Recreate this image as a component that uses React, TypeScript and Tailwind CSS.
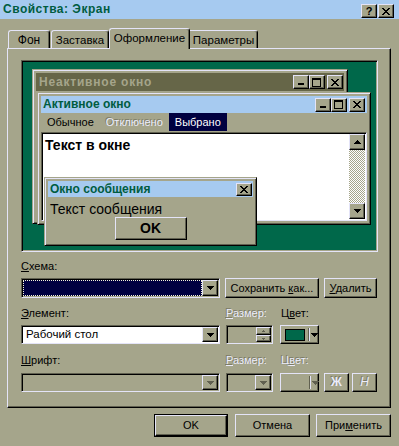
import React from "react";

const RAISED =
  "border border-t-[#e4e4f8] border-l-[#e4e4f8] border-r-black border-b-black shadow-[inset_-1px_-1px_0_#606050]";
const SUNKEN =
  "border border-t-[#606050] border-l-[#606050] border-r-[#e4e4f8] border-b-[#e4e4f8] shadow-[inset_1px_1px_0_#000]";
const WINFRAME =
  "border border-t-[#a5a58b] border-l-[#a5a58b] border-r-black border-b-black shadow-[inset_1px_1px_0_#e4e4f8,inset_-1px_-1px_0_#606050]";
const DIS = "text-[#ececfa] [text-shadow:-1px_-1px_0_#7c7c68]";

function CloseIcon() {
  return (
    <svg width="8" height="7" viewBox="0 0 8 7" shapeRendering="crispEdges">
      <path d="M0 0h2v1h1v1h2V1h1V0h2v1H7v1H6v1H5v1h1v1h1v1h1v1H6V6H5V5H3v1H2v1H0V6h1V5h1V4h1V3H2V2H1V1H0z" fill="#000" />
    </svg>
  );
}

function MinIcon() {
  return (
    <svg width="6" height="2" viewBox="0 0 6 2" shapeRendering="crispEdges">
      <rect width="6" height="2" fill="#000" />
    </svg>
  );
}

function MaxIcon() {
  return (
    <svg width="9" height="9" viewBox="0 0 9 9" shapeRendering="crispEdges">
      <path d="M0 0h9v9H0zM1 2v6h7V2z" fill="#000" fillRule="evenodd" />
    </svg>
  );
}

function ArrowDown({ color = "#000" }: { color?: string }) {
  return (
    <svg width="7" height="4" viewBox="0 0 7 4" shapeRendering="crispEdges">
      <path d="M0 0h7v1H6v1H5v1H4v1H3V3H2V2H1V1H0z" fill={color} />
    </svg>
  );
}

function ArrowUp({ color = "#000" }: { color?: string }) {
  return (
    <svg width="7" height="4" viewBox="0 0 7 4" shapeRendering="crispEdges">
      <path d="M3 0h1v1h1v1h1v1h1v1H0V3h1V2h1V1h1z" fill={color} />
    </svg>
  );
}

function TitleBtn({ kind }: { kind: "min" | "max" | "close" }) {
  if (kind === "min")
    return (
      <div className={"w-[16px] h-[14px] bg-[#a5a58b] flex items-end pl-[4px] pb-[3px] " + RAISED}>
        <MinIcon />
      </div>
    );
  if (kind === "max")
    return (
      <div className={"w-[16px] h-[14px] bg-[#a5a58b] flex items-center justify-center pr-[1px] " + RAISED}>
        <MaxIcon />
      </div>
    );
  return (
    <div className={"w-[16px] h-[14px] bg-[#a5a58b] flex items-center justify-center pr-[1px] " + RAISED}>
      <CloseIcon />
    </div>
  );
}

function DropBtn({ disabled = false }: { disabled?: boolean }) {
  return (
    <div className={"w-[16px] h-full bg-[#a5a58b] flex items-center justify-center " + RAISED}>
      <ArrowDown color={disabled ? "#606050" : "#000"} />
    </div>
  );
}

function Preview() {
  return (
    <div className={"w-[357px] h-[192px] p-[1px] flex " + SUNKEN}>
      <div className="relative flex-1 bg-[#00684a]">
        {/* inactive window */}
        <div className={"absolute left-[9px] top-[7px] w-[316px] h-[155px] bg-[#a5a58b] p-[3px] " + WINFRAME}>
          <div className="h-[18px] bg-[#666648] flex items-center pl-[3px] pr-[1px]">
            <span className="flex-1 font-bold text-[12px] tracking-[0.8px] text-[#a5a58b]">Неактивное окно</span>
            <TitleBtn kind="min" />
            <TitleBtn kind="max" />
            <div className="w-[2px]" />
            <TitleBtn kind="close" />
          </div>
        </div>
        {/* active window */}
        <div className={"absolute left-[14px] top-[30px] w-[334px] h-[133px] bg-[#a5a58b] p-[3px] flex flex-col " + WINFRAME}>
          <div className="h-[17px] bg-[#a6caf0] flex items-center pl-[2px] pr-[2px]">
            <span className="flex-1 font-bold text-[12px] text-[#005c40]">Активное окно</span>
            <TitleBtn kind="min" />
            <TitleBtn kind="max" />
            <div className="w-[2px]" />
            <TitleBtn kind="close" />
          </div>
          <div className="h-[18px] flex items-stretch text-[11px] leading-[18px]">
            <span className="px-[6px]">Обычное</span>
            <span className={"px-[6px] " + DIS}>Отключено</span>
            <span className="px-[6px] bg-[#000040] text-white">Выбрано</span>
          </div>
          <div className={"mt-[1px] flex-1 bg-white flex p-[1px] " + SUNKEN}>
            <div className="flex-1 pl-[2px] pt-[3px] font-bold text-[14px] leading-[16px]">Текст в окне</div>
            <div className="w-[16px] flex flex-col">
              <div className={"h-[16px] bg-[#a5a58b] flex items-center justify-center " + RAISED}>
                <ArrowUp />
              </div>
              <div className="flex-1 bg-[image:repeating-conic-gradient(#a5a58b_0%_25%,#ffffff_0%_50%)] bg-[length:2px_2px]" />
              <div className={"h-[16px] bg-[#a5a58b] flex items-center justify-center " + RAISED}>
                <ArrowDown />
              </div>
            </div>
          </div>
        </div>
        {/* message box */}
        <div className={"absolute left-[21px] top-[115px] w-[213px] h-[69px] bg-[#a5a58b] p-[3px] flex flex-col " + WINFRAME}>
          <div className="h-[16px] bg-[#a6caf0] flex items-center pl-[2px] pr-[1px]">
            <span className="flex-1 font-bold text-[12px] text-[#005c40]">Окно сообщения</span>
            <div className={"w-[16px] h-[13px] bg-[#a5a58b] flex items-center justify-center pr-[1px] " + RAISED}>
              <CloseIcon />
            </div>
          </div>
          <div className="mt-[4px] pl-[2px] text-[14px] leading-[16px]">Текст сообщения</div>
          <div className="flex justify-center">
            <div className={"w-[72px] h-[23px] bg-[#a5a58b] flex items-center justify-center font-bold text-[14px] " + RAISED}>
              OK
            </div>
          </div>
        </div>
      </div>
    </div>
  );
}

export default function App() {
  return (
    <div className="w-[399px] h-[446px] bg-[#a5a58b] overflow-hidden [font-family:'Liberation_Sans',Arial,sans-serif] text-[11px] leading-[13px] text-black select-none">
      {/* title bar */}
      <div className="h-[19px] bg-[#a6caf0] flex items-center pl-[3px] pr-[5px]">
        <span className="flex-1 font-bold text-[12px] tracking-[0.5px] text-[#005c40]">Свойства: Экран</span>
        <div className="flex gap-[1px] self-end mb-[1px]">
          <div className={"w-[16px] h-[14px] bg-[#a5a58b] flex items-center justify-center font-bold text-[11px] leading-[12px] " + RAISED}>
            ?
          </div>
          <div className={"w-[16px] h-[14px] bg-[#a5a58b] flex items-center justify-center pr-[1px] " + RAISED}>
            <CloseIcon />
          </div>
        </div>
      </div>

      {/* tabs */}
      <div className="flex items-end h-[20px] mt-[9px] pl-[8px]">
        <div className="w-[42px] h-[18px] bg-[#a5a58b] border-t border-l border-r border-t-[#e4e4f8] border-l-[#e4e4f8] border-r-black rounded-t-[3px] shadow-[inset_-1px_0_0_#606050] flex items-center justify-center pt-[1px] text-[12px]">
          Фон
        </div>
        <div className="ml-[1px] w-[58px] h-[18px] bg-[#a5a58b] border-t border-l border-r border-t-[#e4e4f8] border-l-[#e4e4f8] border-r-black rounded-t-[3px] shadow-[inset_-1px_0_0_#606050] flex items-center justify-center pt-[1px] text-[11.5px]">
          Заставка
        </div>
        <div className="relative z-10 w-[81px] h-[21px] -mb-[1px] bg-[#a5a58b] border-t border-l border-r border-t-[#e4e4f8] border-l-[#e4e4f8] border-r-black rounded-t-[3px] shadow-[inset_-1px_0_0_#606050] flex items-start justify-center pt-[3px] text-[11.5px]">
          Оформление
        </div>
        <div className="w-[68px] h-[18px] bg-[#a5a58b] border-t border-r border-t-[#e4e4f8] border-r-black rounded-tr-[3px] shadow-[inset_-1px_0_0_#606050] flex items-center justify-center pt-[1px] text-[11.5px]">
          Параметры
        </div>
      </div>

      {/* panel */}
      <div className={"relative ml-[7px] w-[384px] h-[360px] bg-[#a5a58b] pl-[13px] pt-[11px] flex flex-col " + RAISED}>
        <Preview />

        {/* Схема */}
        <div className="mt-[8px]">
          <span className="underline">С</span>хема:
        </div>
        <div className="mt-[5px] flex items-start">
          <div className={"w-[199px] h-[20px] p-[1px] flex " + SUNKEN}>
            <div className="flex-1 bg-[#000040] border border-dotted border-[#f4f4d8]" />
            <DropBtn />
          </div>
          <div className={"ml-[5px] w-[94px] h-[20px] bg-[#a5a58b] flex items-center justify-center " + RAISED}>
            <span>
              Сохранить <span className="underline">к</span>ак...
            </span>
          </div>
          <div className={"ml-[5px] w-[53px] h-[20px] bg-[#a5a58b] flex items-center justify-center " + RAISED}>
            <span>
              <span className="underline">У</span>далить
            </span>
          </div>
        </div>

        {/* Элемент */}
        <div className="mt-[9px] flex">
          <div className="w-[205px]">
            <span className="underline">Э</span>лемент:
          </div>
          <div className={"w-[55px] " + DIS}>
            <span className="underline">Р</span>азмер:
          </div>
          <div>
            Ц<span className="underline">в</span>ет:
          </div>
        </div>
        <div className="mt-[5px] flex items-start h-[19px]">
          <div className={"w-[199px] h-[19px] p-[1px] flex bg-white " + SUNKEN}>
            <div className="flex-1 pl-[3px] text-[11.5px] leading-[15px]">Рабочий стол</div>
            <DropBtn />
          </div>
          <div className={"ml-[6px] w-[47px] h-[19px] p-[1px] flex justify-end " + SUNKEN}>
            <div className="w-[15px] flex flex-col">
              <div className={"h-[8px] bg-[#a5a58b] flex items-center justify-center " + RAISED}>
                <svg width="3" height="2" viewBox="0 0 3 2" shapeRendering="crispEdges">
                  <path d="M1 0h1v1h1v1H0V1h1z" fill="#606050" />
                </svg>
              </div>
              <div className={"h-[7px] bg-[#a5a58b] flex items-center justify-center " + RAISED}>
                <svg width="3" height="2" viewBox="0 0 3 2" shapeRendering="crispEdges">
                  <path d="M0 0h3v1H2v1H1V1H0z" fill="#606050" />
                </svg>
              </div>
            </div>
          </div>
          <div className={"ml-[7px] w-[39px] h-[19px] bg-[#a5a58b] flex items-center pl-[4px] " + RAISED}>
            <div className="w-[21px] h-[12px] bg-[#00684a] border border-black" />
            <div className="ml-[3px] w-[2px] h-[13px] border-l border-l-[#606050] border-r border-r-[#e4e4f8]" />
            <div className="ml-[1px]">
              <ArrowDown />
            </div>
          </div>
        </div>

        {/* Шрифт */}
        <div className="mt-[10px] flex">
          <div className="w-[205px]">
            <span className="underline">Ш</span>рифт:
          </div>
          <div className={"w-[55px] " + DIS}>
            <span className="underline">Р</span>азмер:
          </div>
          <div className={DIS}>
            Ц<span className="underline">в</span>ет:
          </div>
        </div>
        <div className="mt-[6px] flex items-start h-[19px]">
          <div className={"w-[199px] h-[19px] p-[1px] flex " + SUNKEN}>
            <div className="flex-1" />
            <DropBtn disabled />
          </div>
          <div className={"ml-[6px] w-[47px] h-[19px] p-[1px] flex " + SUNKEN}>
            <div className="flex-1" />
            <DropBtn disabled />
          </div>
          <div className={"ml-[7px] w-[39px] h-[19px] bg-[#a5a58b] flex items-center pl-[28px] " + RAISED}>
            <div className="w-[2px] h-[13px] border-l border-l-[#606050] border-r border-r-[#e4e4f8]" />
            <div className="ml-[1px]">
              <ArrowDown color="#606050" />
            </div>
          </div>
          <div className={"ml-[5px] w-[25px] h-[19px] bg-[#a5a58b] flex items-center justify-center font-bold text-[12px] " + RAISED}>
            <span className={DIS}>Ж</span>
          </div>
          <div className={"ml-[3px] w-[25px] h-[19px] bg-[#a5a58b] flex items-center justify-center italic text-[12px] " + RAISED}>
            <span className={DIS}>Н</span>
          </div>
        </div>
      </div>

      {/* bottom buttons */}
      <div className="mt-[6px] flex pl-[154px]">
        <div className="w-[74px] h-[23px] border border-black">
          <div className={"w-full h-full bg-[#a5a58b] flex items-center justify-center " + RAISED}>OK</div>
        </div>
        <div className={"ml-[7px] w-[75px] h-[23px] bg-[#a5a58b] flex items-center justify-center " + RAISED}>Отмена</div>
        <div className={"ml-[6px] w-[75px] h-[23px] bg-[#a5a58b] flex items-center justify-center " + RAISED}>
          <span>
            При<span className="underline">м</span>енить
          </span>
        </div>
      </div>
    </div>
  );
}
